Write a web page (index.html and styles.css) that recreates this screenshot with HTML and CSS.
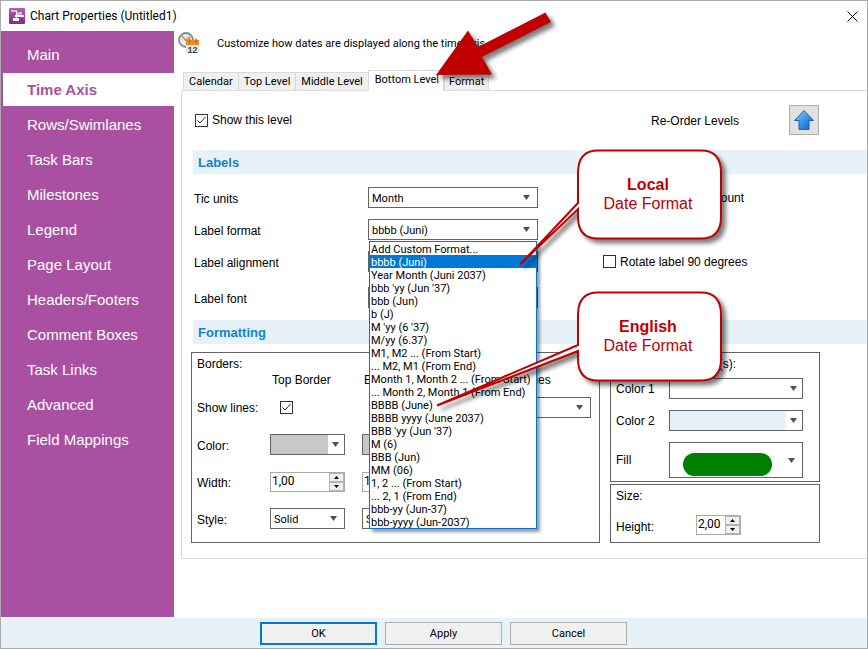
FILE: index.html
```html
<!DOCTYPE html>
<html lang="en">
<head>
    <meta charset="UTF-8">
    <meta name="viewport" content="width=device-width, initial-scale=1.0">
    <title>Chart Properties (Untitled1)</title>
    <link rel="stylesheet" href="styles.css">
</head>
<body>
    <div class="window">
        <header class="titlebar">
            <svg class="app-icon" width="16" height="16" viewBox="0 0 16 16">
                <defs>
                    <linearGradient id="appGrad" x1="0" y1="0" x2="0" y2="1">
                        <stop offset="0" stop-color="#b65bb0"/>
                        <stop offset="1" stop-color="#7d2c80"/>
                    </linearGradient>
                </defs>
                <rect width="16" height="16" rx="1" fill="url(#appGrad)"/>
                <path d="M2 2h6v2H2zM7 4h6v3H7z" fill="#dcb4db"/>
                <path d="M6 7h9v2H6zM4 10h6v3H4z" fill="#fff"/>
                <path d="M7.500 2v10" stroke="#f4e4f4"/>
            </svg>
            <h1>Chart Properties (Untitled1)</h1>
            <button class="close" type="button" aria-label="Close">
                <svg width="11" height="11" viewBox="0 0 11 11"><path d="M.5 .5l10 10M10.5 .5l-10 10" stroke="#000" fill="none"/></svg>
            </button>
        </header>

        <div class="main">
            <nav class="sidebar">
                <a href="#">Main</a>
                <a href="#" class="active">Time Axis</a>
                <a href="#">Rows/Swimlanes</a>
                <a href="#">Task Bars</a>
                <a href="#">Milestones</a>
                <a href="#">Legend</a>
                <a href="#">Page Layout</a>
                <a href="#">Headers/Footers</a>
                <a href="#">Comment Boxes</a>
                <a href="#">Task Links</a>
                <a href="#">Advanced</a>
                <a href="#">Field Mappings</a>
            </nav>

            <main class="content">
                <div class="intro">
                    <svg width="22" height="22" viewBox="0 0 22 22">
                        <circle cx="8" cy="8" r="7" fill="#e4ecf0" stroke="#7d8f9b" stroke-width="1.800"/>
                        <path d="M4 4l4 4.500 4-4" stroke="#f08a1c" stroke-width="1.600" fill="none"/>
                        <rect x="8" y="9" width="13" height="12" fill="#e3e8eb"/>
                        <rect x="8" y="8" width="13" height="5" fill="#f58a1f"/>
                        <path d="M11.500 6.500v4M18 6.500v4" stroke="#a8683a" stroke-width="1.500"/>
                        <text x="14.500" y="20.500" class="icon-day">12</text>
                    </svg>
                    <p>Customize how dates are displayed along the time axis.</p>
                </div>

                <div class="tabs">
                    <button type="button">Calendar</button>
                    <button type="button">Top Level</button>
                    <button type="button">Middle Level</button>
                    <button type="button" class="selected">Bottom Level</button>
                    <button type="button">Format</button>
                </div>

                <form class="panel">
                    <div class="top-row">
                        <label class="check"><input type="checkbox" checked>Show this level</label>
                        <span class="reorder">Re-Order Levels</span>
                        <button class="up" type="button" aria-label="Move level up">
                            <svg width="22" height="22" viewBox="0 0 22 22">
                                <defs>
                                    <linearGradient id="upGrad" x1="0" y1="0" x2="1" y2="1">
                                        <stop offset="0" stop-color="#a8d4fb"/>
                                        <stop offset=".5" stop-color="#3c93ea"/>
                                        <stop offset="1" stop-color="#0a5cc4"/>
                                    </linearGradient>
                                </defs>
                                <path d="M11 1.500L20.500 11.500H16V20.500H6V11.500H1.500Z" fill="url(#upGrad)" stroke="#1562be"/>
                            </svg>
                        </button>
                    </div>

                    <h2>Labels</h2>
                    <div class="fields">
                        <label for="ticUnits">Tic units</label>
                        <select id="ticUnits"><option>Month</option></select>
                        <label class="check"><input type="checkbox">Show the Tic unit count</label>

                        <label for="labelFormat">Label format</label>
                        <div class="combo">
                            <select id="labelFormat"><option>bbbb (Juni)</option></select>
                            <ul class="options">
                                <li>Add Custom Format...</li>
                                <li class="current">bbbb (Juni)</li>
                                <li>Year Month (Juni 2037)</li>
                                <li>bbb 'yy (Jun '37)</li>
                                <li>bbb (Jun)</li>
                                <li>b (J)</li>
                                <li>M 'yy (6 '37)</li>
                                <li>M/yy (6.37)</li>
                                <li>M1, M2 ... (From Start)</li>
                                <li>... M2, M1 (From End)</li>
                                <li>Month 1, Month 2 ... (From Start)</li>
                                <li>... Month 2, Month 1 (From End)</li>
                                <li>BBBB (June)</li>
                                <li>BBBB yyyy (June 2037)</li>
                                <li>BBB 'yy (Jun '37)</li>
                                <li>M (6)</li>
                                <li>BBB (Jun)</li>
                                <li>MM (06)</li>
                                <li>1, 2 ... (From Start)</li>
                                <li>... 2, 1 (From End)</li>
                                <li>bbb-yy (Jun-37)</li>
                                <li>bbb-yyyy (Jun-2037)</li>
                            </ul>
                        </div>
                        <span></span>

                        <label for="labelAlign">Label alignment</label>
                        <select id="labelAlign"><option>Center</option></select>
                        <label class="check"><input type="checkbox">Rotate label 90 degrees</label>

                        <label for="labelFont">Label font</label>
                        <select id="labelFont"><option>Arial</option></select>
                    </div>

                    <h2>Formatting</h2>
                    <div class="groups">
                        <fieldset class="borders">
                            <p>Borders:</p>
                            <div class="border-grid">
                                <span></span>
                                <span class="head">Top Border</span>
                                <span class="head">Bottom Border</span>
                                <span class="head last">Separator Lines</span>

                                <span class="name">Show lines:</span>
                                <input class="tick" type="checkbox" checked aria-label="Top border">
                                <input class="tick" type="checkbox" checked aria-label="Bottom border">
                                <select aria-label="Separator lines"><option>Automatic</option></select>

                                <span class="name">Color:</span>
                                <select class="swatch grey" aria-label="Top color"></select>
                                <select class="swatch grey" aria-label="Bottom color"></select>
                                <span></span>

                                <span class="name">Width:</span>
                                <div class="spin"><input type="text" value="1,00" aria-label="Top width"><span class="arrows"><button type="button" aria-label="Up"></button><button type="button" aria-label="Down"></button></span></div>
                                <div class="spin"><input type="text" value="1,00" aria-label="Bottom width"><span class="arrows"><button type="button" aria-label="Up"></button><button type="button" aria-label="Down"></button></span></div>
                                <span></span>

                                <span class="name">Style:</span>
                                <select aria-label="Top style"><option>Solid</option></select>
                                <select aria-label="Bottom style"><option>Solid</option></select>
                            </div>
                        </fieldset>

                        <div class="side">
                            <fieldset class="fills">
                                <p>Background Colour(s):</p>
                                <div class="row"><label for="color1">Color 1</label><select id="color1" class="swatch"></select></div>
                                <div class="row"><label for="color2">Color 2</label><select id="color2" class="swatch blue"></select></div>
                                <div class="row"><label for="fill">Fill</label>
                                    <div class="fill-box"><select id="fill"></select><i class="pill"></i></div>
                                </div>
                            </fieldset>
                            <fieldset class="size">
                                <p>Size:</p>
                                <div class="size-row">
                                    <label for="height">Height:</label>
                                    <div class="spin"><input id="height" type="text" value="2,00"><span class="arrows"><button type="button" aria-label="Up"></button><button type="button" aria-label="Down"></button></span></div>
                                </div>
                            </fieldset>
                        </div>
                    </div>
                </form>
            </main>
        </div>

        <footer class="buttons">
            <button type="button" class="default">OK</button>
            <button type="button">Apply</button>
            <button type="button">Cancel</button>
        </footer>

        <!-- callouts over the dialog -->
        <svg class="notes" width="868" height="649" viewBox="0 0 868 649">
            <path class="arrow" d="M436 75L468 30.500L478 47L545.500 12.500L551 22L482 57L492 74.500Z"/>
            <path class="bubble" d="M598 150.500H701Q721 150.500 721 173V217Q721 238.500 701 238.500H598Q578 238.500 578 217V209L520 264.500L578 203V173Q578 150.500 598 150.500Z"/>
            <path class="bubble" d="M598 292.500H701Q721 292.500 721 315V359Q721 380.500 701 380.500H598Q578 380.500 578 359V351L437 405.500L578 345V315Q578 292.500 598 292.500Z"/>
            <text x="648" y="190" class="strong">Local</text>
            <text x="648" y="209">Date Format</text>
            <text x="648" y="332" class="strong">English</text>
            <text x="648" y="351">Date Format</text>
        </svg>
    </div>
</body>
</html>
```

FILE: styles.css
```css
* {
    box-sizing: border-box;
}
body {
    margin: 0;
    font: 12px/16px "Liberation Sans", Arial, sans-serif;
    color: #000;
    background: #fff;
}
h1, h2, p, ul, fieldset {
    margin: 0;
    padding: 0;
}
input, select, button {
    font: 11px/16px Roboto, "Liberation Sans", sans-serif;
    color: inherit;
    margin: 0;
}
.window {
    position: relative;
    display: flex;
    flex-direction: column;
    min-height: 100vh;
    border: 1px solid #aaa;
    overflow: hidden;
}
.titlebar {
    display: flex;
    align-items: center;
    height: 30px;
    padding: 0 9px 0 8px;
}
.titlebar h1 {
    flex: 1;
    margin-left: 5px;
    font: 12px/16px Roboto, "Liberation Sans", sans-serif;
}
.close {
    display: flex;
    padding: 0;
    border: 0;
    background: none;
}
.main {
    display: flex;
    flex: 1;
}
.sidebar {
    flex: none;
    width: 173px;
    padding: 7px 0 0 2px;
    background: #a950a3;
}
.sidebar a {
    display: block;
    height: 33px;
    margin-bottom: 2px;
    padding-left: 24px;
    font-size: 15px;
    line-height: 33px;
    color: #fff;
    text-decoration: none;
}
.sidebar .active {
    background: #fff;
    color: #a950a3;
    font-weight: bold;
}
.content {
    flex: 1;
    min-width: 0;
    padding-left: 4px;
}
.intro {
    display: flex;
    align-items: center;
    height: 24px;
}
.intro p {
    margin-left: 17px;
    padding-top: 2px;
    font: 11px/16px Roboto, "Liberation Sans", sans-serif;
}
.icon-day {
    font: bold 9px "Liberation Sans", sans-serif;
    text-anchor: middle;
    fill: #37474f;
}
.tabs {
    display: flex;
    align-items: flex-end;
    height: 20px;
    margin: 15px 0 0 5px;
}
.tabs button {
    height: 18px;
    margin-right: -1px;
    padding: 1px 5px 0;
    border: 1px solid #d9d9d9;
    border-bottom: 0;
    background: #f0f0f0;
}
.tabs .selected {
    position: relative;
    height: 21px;
    margin: 0 0 -1px;
    padding: 0 4px 2px 6px;
    background: #fff;
}
.tabs .selected + button {
    padding: 1px 4px 0;
}
.panel {
    margin-left: 3px;
    height: 469px;
    border: 1px solid #dcdcdc;
    border-right: 0;
    padding: 14px 0 0 10px;
}
.check {
    display: flex;
    align-items: center;
}
input[type="checkbox"] {
    appearance: none;
    width: 13px;
    height: 13px;
    border: 1px solid #333;
    background: #fff;
}
input[type="checkbox"]:checked {
    background: #fff url("data:image/svg+xml,%3Csvg xmlns='http://www.w3.org/2000/svg' viewBox='0 0 11 11'%3E%3Cpath d='M1.500 5.500l2.500 2.500 5.500-6' fill='none' stroke='%23222'/%3E%3C/svg%3E");
}
.check input {
    margin-right: 4px;
}
.top-row {
    display: flex;
    align-items: center;
    height: 30px;
    margin: 0 48px 15px 3px;
}
.reorder {
    margin-left: auto;
    margin-right: 50px;
    padding-top: 2px;
}
.up {
    display: flex;
    align-items: center;
    justify-content: center;
    width: 30px;
    height: 30px;
    padding: 0;
    border: 1px solid #adadad;
    background: #e1e1e1;
}
.panel h2 {
    height: 24px;
    margin-left: 1px;
    padding-left: 5px;
    background: #e6f2f7;
    color: #1583c9;
    font-size: 13px;
    line-height: 25px;
}
.fields {
    display: grid;
    grid-template-columns: 174px 170px auto;
    grid-template-rows: 21px 21px 21px 29px;
    row-gap: 11px;
    align-items: center;
    margin: 13px 0 8px 2px;
}
.fields label {
    padding-top: 2px;
}
.fields .check {
    margin-left: 65px;
    padding: 0;
}
select {
    appearance: none;
    width: 100%;
    height: 21px;
    padding: 2px 3px 0;
    border: 1px solid #646464;
    border-radius: 0;
    background: #fff url("data:image/svg+xml,%3Csvg xmlns='http://www.w3.org/2000/svg' viewBox='0 0 7 5'%3E%3Cpath d='M0 0h7L3.500 5z' fill='%23505050'/%3E%3C/svg%3E") no-repeat right 7px center / 7px 5px;
}
.combo {
    position: relative;
}
.options {
    position: absolute;
    z-index: 2;
    top: 22px;
    left: 1px;
    width: 168px;
    border: 1px solid #0078d7;
    background: #fff;
    box-shadow: 3px 3px 3px rgba(0, 0, 0, .4);
    list-style: none;
    font: 11px/15px Roboto, "Liberation Sans", sans-serif;
}
.options li {
    height: 13px;
    padding-left: 1px;
    white-space: nowrap;
}
.options .current {
    background: #0078d7;
    color: #fff;
}
.groups {
    display: flex;
    margin: 8px 0 0 -1px;
}
fieldset {
    min-width: 0;
    border: 1px solid #646464;
}
.borders {
    width: 409px;
    height: 191px;
    padding: 3px 5px;
}
.border-grid {
    display: grid;
    grid-template-columns: 56px 75px 75px 137px;
    grid-template-rows: 16px 38px 37px 37px 37px;
    column-gap: 17px;
    align-items: center;
    white-space: nowrap;
}
.head {
    padding-left: 2px;
}
.last {
    padding-left: 12px;
}
.name {
    padding-top: 2px;
}
.tick {
    margin-left: 10px;
}
.swatch {
    background-position: right 5px center;
}
.grey {
    box-shadow: inset 57px 0 #c8c8c8;
}
.blue {
    box-shadow: inset 116px 0 #e6f1f8;
}
.spin {
    display: flex;
    height: 20px;
    border: 1px solid #ababab;
}
.spin input {
    flex: 1;
    min-width: 0;
    padding: 0 1px 2px;
    border: 0;
    font-size: 12px;
}
.arrows {
    display: flex;
    flex-direction: column;
    width: 15px;
}
.arrows button {
    flex: 1;
    padding: 0;
    border: 1px solid #b4b4b4;
    background: #f0f0f0 url("data:image/svg+xml,%3Csvg xmlns='http://www.w3.org/2000/svg' viewBox='0 0 5 3'%3E%3Cpath d='M0 3h5L2.500 0z'/%3E%3C/svg%3E") no-repeat center / 5px 3px;
}
.arrows button:last-child {
    transform: rotate(180deg);
}
.side {
    width: 210px;
    margin-left: 10px;
}
.fills {
    height: 130px;
    padding: 3px 5px;
}
.row {
    display: grid;
    grid-template-columns: 53px 134px;
    align-items: center;
    margin-bottom: 11px;
}
.fills p {
    margin-bottom: 6px;
}
.fill-box {
    position: relative;
}
.fill-box select {
    display: block;
    height: 36px;
}
.pill {
    position: absolute;
    left: 14px;
    bottom: 2px;
    width: 89px;
    height: 23px;
    border-radius: 12px;
    background: #008000;
}
.size {
    height: 59px;
    margin-top: 2px;
    padding: 3px 5px;
}
.size-row {
    display: grid;
    grid-template-columns: 80px 45px;
    align-items: center;
    margin-top: 11px;
}
.size-row label {
    padding-top: 4px;
}
.buttons {
    display: flex;
    justify-content: center;
    gap: 8px;
    padding: 4px 0 3px 19px;
    border-top: 1px solid #fff;
    background: #e6f2f7;
}
.buttons button {
    width: 117px;
    height: 23px;
    padding: 0;
    border: 1px solid #adadad;
    background: #f0f0f0;
}
.buttons .default {
    border: 2px solid #0078d7;
}
.notes {
    position: absolute;
    z-index: 3;
    top: -1px;
    left: -1px;
    pointer-events: none;
    font: 16px "Liberation Sans", Arial, sans-serif;
    text-anchor: middle;
    fill: #c00000;
}
.strong {
    font-weight: bold;
}
.arrow, .bubble {
    filter: drop-shadow(4px 4px 2px rgba(0, 0, 0, .5));
}
.bubble {
    fill: #fff;
    stroke: #c00000;
    stroke-width: 2;
}
```
